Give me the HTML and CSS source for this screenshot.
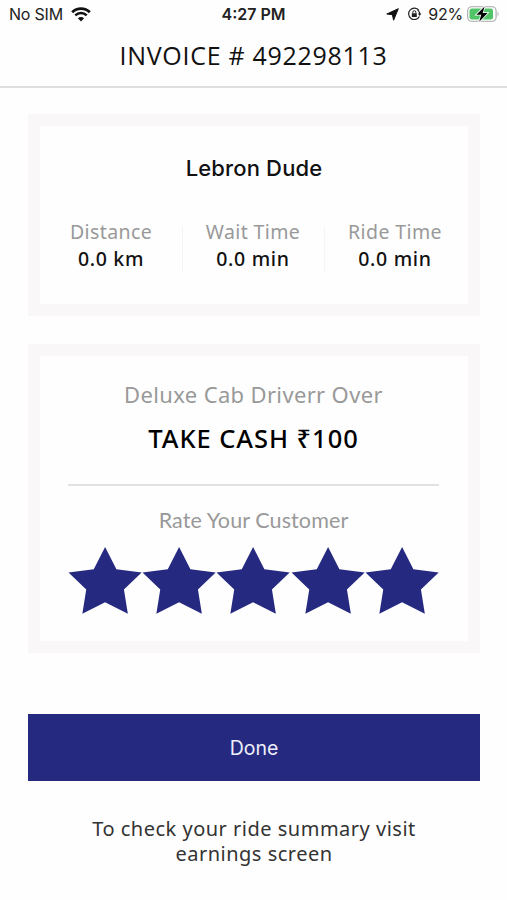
FILE: index.html
```html
<!DOCTYPE html>
<html lang="en">
<head>
    <meta charset="UTF-8">
    <meta name="viewport" content="width=device-width, initial-scale=1.0">
    <title>Invoice</title>
    <link rel="stylesheet" href="styles.css">
</head>
<body>
    <div class="status-bar">
        <div class="status-left">
            <span class="carrier">No SIM</span>
            <svg class="wifi" width="20" height="15" viewBox="0 0 20 15">
                <path d="M1.2 5.2A12.6 12.6 0 0 1 18.8 5.2" fill="none" stroke="#111" stroke-width="2.8"/>
                <path d="M4.3 8.4A8.2 8.2 0 0 1 15.7 8.4" fill="none" stroke="#111" stroke-width="2.5"/>
                <path d="M6.9 11.2A4.4 4.4 0 0 1 13.1 11.2L10 14.4Z" fill="#111"/>
            </svg>
        </div>
        <div class="clock">4:27 PM</div>
        <div class="status-right">
            <svg class="location" width="13" height="13" viewBox="0 0 13 13">
                <path d="M12.3 .7L7.6 12.2L6.4 6.7L.8 6Z" fill="#111" stroke="#111" stroke-width="1" stroke-linejoin="round"/>
            </svg>
            <svg class="lock" width="15" height="14" viewBox="0 0 15 14">
                <path d="M11.9 3.4A5.7 5.7 0 1 0 12.4 9.4" fill="none" stroke="#222" stroke-width="1.2"/>
                <path d="M10.7 3.1A5.5 5.5 0 0 1 12.8 7.2" fill="none" stroke="#222" stroke-width="1.2"/>
                <path d="M10.9 6.4H14.4L12.6 9Z" fill="#222"/>
                <rect x="4.8" y="6.2" width="5" height="3.8" rx=".5" fill="#222"/>
                <path d="M5.8 6.4V5.2A1.5 1.5 0 0 1 8.8 5.2V6.4" fill="none" stroke="#222" stroke-width="1"/>
            </svg>
            <span class="percent">92%</span>
            <svg class="battery" width="33" height="18" viewBox="0 0 33 18">
                <rect x=".7" y="1.7" width="28.4" height="14.6" rx="4" fill="#fff" stroke="#a5a9a6" stroke-width="1.1"/>
                <rect x="2.5" y="3.5" width="23.5" height="11" rx="2.3" fill="#52c468"/>
                <path d="M30.6 6.4Q32.6 8.9 30.6 11.4Z" fill="#a5a9a6"/>
                <path d="M17.6 1.4L9.4 9.8H14.2L12.2 16.8L20.6 8.1H15.7Z" fill="#000" stroke="#fff" stroke-width="1.6" paint-order="stroke"/>
            </svg>
        </div>
    </div>

    <header class="header">
        <h1 class="title">INVOICE # 492298113</h1>
    </header>

    <div class="container">
        <div class="card ride-card">
            <h2 class="customer">Lebron Dude</h2>
            <div class="stats">
                <div class="stat">
                    <div class="stat-label">Distance</div>
                    <div class="stat-value">0.0 km</div>
                </div>
                <div class="stat">
                    <div class="stat-label">Wait Time</div>
                    <div class="stat-value">0.0 min</div>
                </div>
                <div class="stat">
                    <div class="stat-label">Ride Time</div>
                    <div class="stat-value">0.0 min</div>
                </div>
            </div>
        </div>

        <div class="card payment-card">
            <div class="ride-type">Deluxe Cab Driverr Over</div>
            <div class="amount">TAKE CASH ₹100</div>
            <div class="divider"></div>
            <div class="rate-label">Rate Your Customer</div>
            <div class="stars">
                <svg class="star" viewBox="0 0 74 67"><path d="M37 0L48.3 22.1L73.5 25.5L55.8 42.5L59.7 66.5L37 55.2L14.3 66.5L18.2 42.5L.5 25.5L25.7 22.1Z"/></svg>
                <svg class="star" viewBox="0 0 74 67"><path d="M37 0L48.3 22.1L73.5 25.5L55.8 42.5L59.7 66.5L37 55.2L14.3 66.5L18.2 42.5L.5 25.5L25.7 22.1Z"/></svg>
                <svg class="star" viewBox="0 0 74 67"><path d="M37 0L48.3 22.1L73.5 25.5L55.8 42.5L59.7 66.5L37 55.2L14.3 66.5L18.2 42.5L.5 25.5L25.7 22.1Z"/></svg>
                <svg class="star" viewBox="0 0 74 67"><path d="M37 0L48.3 22.1L73.5 25.5L55.8 42.5L59.7 66.5L37 55.2L14.3 66.5L18.2 42.5L.5 25.5L25.7 22.1Z"/></svg>
                <svg class="star" viewBox="0 0 74 67"><path d="M37 0L48.3 22.1L73.5 25.5L55.8 42.5L59.7 66.5L37 55.2L14.3 66.5L18.2 42.5L.5 25.5L25.7 22.1Z"/></svg>
            </div>
        </div>

        <button type="button" class="done-button">Done</button>
        <p class="note">To check your ride summary visit<br>earnings screen</p>
    </div>
</body>
</html>
```
FILE: styles.css
```css
* {
    box-sizing: border-box;
}

body {
    font-family: "Noto Sans", sans-serif;
    background-color: #fefefe;
    color: #111;
    height: 900px;
    margin: 0;
    overflow: hidden;
}

.status-bar {
    display: grid;
    grid-template-columns: 1fr auto 1fr;
    align-items: center;
    height: 28px;
    padding: 0 7px 0 9px;
    font-family: Inter, sans-serif;
    font-size: 16px;
    color: #222;
}

.status-left,
.status-right {
    display: flex;
    align-items: center;
}

.status-right {
    justify-content: flex-end;
}

.carrier {
    letter-spacing: -0.2px;
}

.wifi {
    margin-left: 8px;
}

.clock {
    margin-left: -2px;
    font-weight: 600;
}

.location {
    margin-right: 8px;
}

.lock {
    margin-right: 6px;
}

.percent {
    letter-spacing: -0.2px;
}

.battery {
    margin-left: 4px;
}

.header {
    height: 60px;
    border-bottom: 2px solid #dedede;
    text-align: center;
}

.title {
    margin: 0;
    font-family: "Open Sans", sans-serif;
    font-size: 25px;
    font-weight: 400;
    line-height: 55px;
    letter-spacing: 0.7px;
}

.container {
    padding: 26px 27px 0 28px;
    text-align: center;
}

.card {
    border: 12px solid #faf7f8;
    background-color: #fefefe;
}

.ride-card {
    height: 202px;
    margin-bottom: 28px;
    padding-top: 26px;
}

.customer {
    margin: 0;
    font-family: Inter, sans-serif;
    font-size: 22px;
    font-weight: 500;
    line-height: 32px;
    letter-spacing: 0.15px;
}

.stats {
    display: grid;
    grid-template-columns: repeat(3, 1fr);
    width: 426px;
    margin-top: 34px;
}

.stat {
    height: 57px;
}

.stat + .stat {
    background: linear-gradient(#f5f5f5, #f5f5f5) left 0 top 8px / 1px 46px no-repeat;
}

.stat-label {
    font-size: 19.5px;
    line-height: 27px;
    letter-spacing: 0.4px;
    color: #999;
}

.stat-value {
    font-size: 19.5px;
    font-weight: 500;
    line-height: 28px;
    letter-spacing: 0.7px;
}

.payment-card {
    height: 309px;
    padding: 22px 29px 0 28px;
}

.ride-type {
    font-size: 22px;
    line-height: 32px;
    letter-spacing: 0.35px;
    color: #999;
}

.amount {
    margin-top: 9px;
    font-size: 25.5px;
    font-weight: 500;
    line-height: 38px;
    letter-spacing: 0.95px;
    color: #000;
}

.divider {
    margin-top: 27px;
    border-top: 2px solid #e2e2e2;
}

.rate-label {
    margin-top: 20px;
    font-family: Lato, sans-serif;
    font-size: 21.5px;
    line-height: 28px;
    letter-spacing: 0.1px;
    color: #999;
}

.stars {
    display: flex;
    margin-top: 13px;
}

.star {
    width: 20%;
    fill: #252a80;
}

.done-button {
    display: block;
    width: 100%;
    height: 67px;
    margin-top: 61px;
    border: none;
    background-color: #252a80;
    color: #eeeefa;
    font-family: Inter, sans-serif;
    font-size: 19.5px;
    cursor: pointer;
}

.note {
    margin: 35px 0 0;
    font-size: 20px;
    line-height: 25px;
    letter-spacing: 0.5px;
    color: #333;
}
```
